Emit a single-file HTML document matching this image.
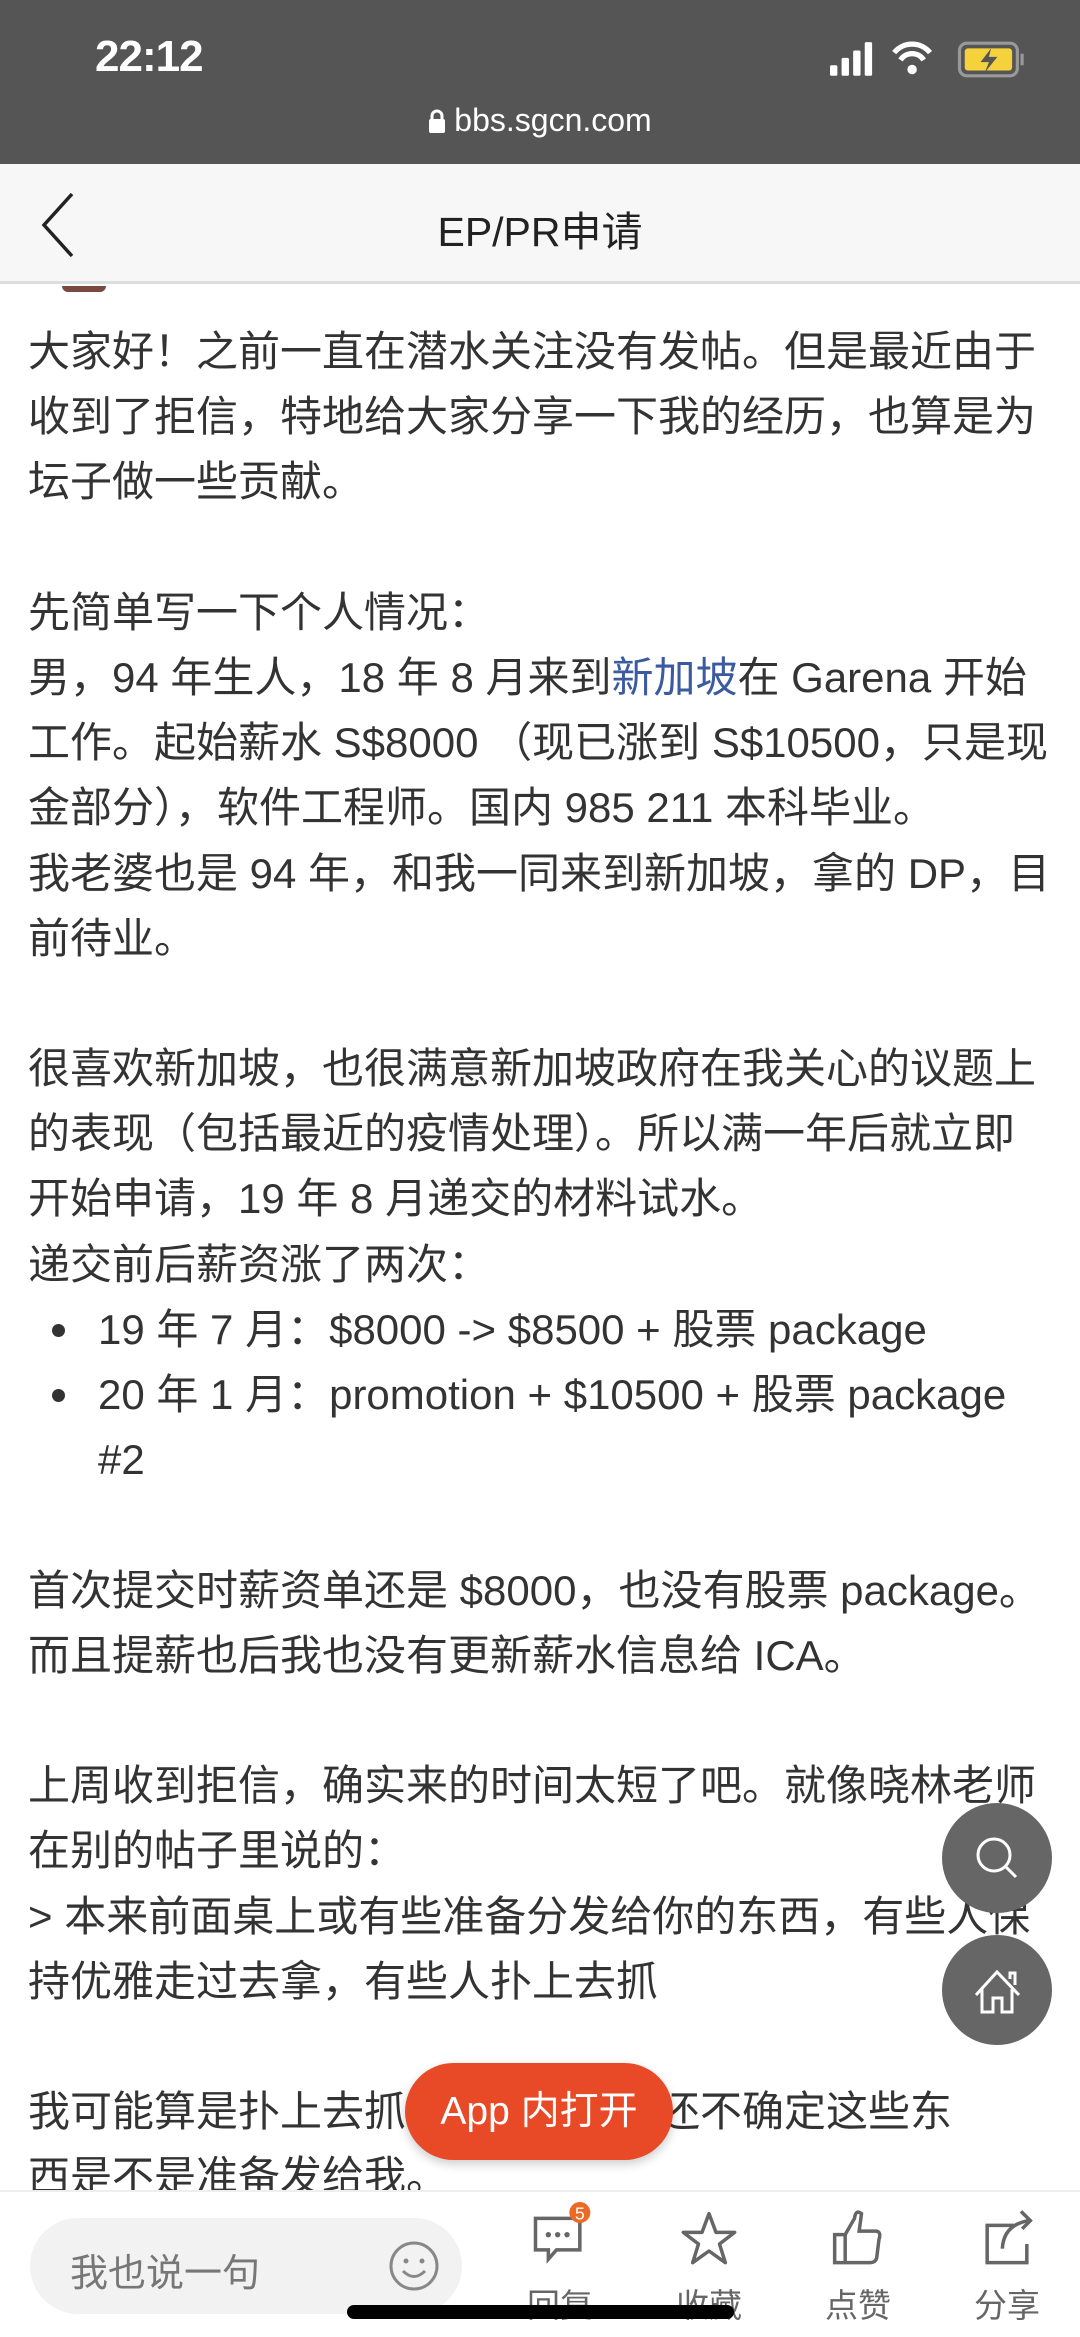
<!DOCTYPE html>
<html><head><meta charset="utf-8"><style>
*{margin:0;padding:0;box-sizing:border-box}
body{width:1080px;height:2337px;overflow:hidden;background:#fff;font-family:"Liberation Sans","Noto Sans CJK SC",sans-serif;color:#333;position:relative}
.status{position:absolute;left:0;top:0;width:1080px;height:164px;background:#555}
.time{position:absolute;left:95px;top:32px;font-size:44px;color:#fff;font-weight:bold;letter-spacing:-1px}
.url{position:absolute;left:0;width:1080px;top:102px;text-align:center;font-size:32px;color:#fff}
.nav{position:absolute;left:0;top:164px;width:1080px;height:120px;background:#f7f7f7;border-bottom:3px solid #ddd}
.title{position:absolute;left:0;width:1080px;top:34px;text-align:center;font-size:41px;color:#222}
.content{position:absolute;left:28px;top:319px;width:1040px;font-size:42px}
.l{height:65.2px;line-height:65.2px;white-space:nowrap;overflow:hidden}
.b{padding-left:70px;position:relative}
.b.dot:before{content:"";position:absolute;left:24px;top:27px;width:13px;height:13px;border-radius:50%;background:#333}
a{color:#3b5aa0;text-decoration:none}
.fab{position:absolute;left:942px;width:110px;height:110px;border-radius:50%;background:#666}
.app{position:absolute;left:405px;top:2063px;width:268px;height:97px;border-radius:49px;background:#e84a27;color:#fff;font-size:39px;text-align:center;line-height:97px;box-shadow:0 4px 10px rgba(0,0,0,.2)}
.bar{position:absolute;left:0;top:2190px;width:1080px;height:147px;background:#fff;border-top:2px solid #eee}
.pill{position:absolute;left:30px;top:26px;width:432px;height:96px;border-radius:48px;background:#f2f2f2}
.pill span{position:absolute;left:40px;top:24px;font-size:38px;color:#777}
.ic{position:absolute;top:10px;width:100px;text-align:center}
.ic div{font-size:33px;color:#666;margin-top:2px}
.home{position:absolute;left:347px;top:2305px;width:387px;height:14px;border-radius:7px;background:#000}
</style></head><body>
<div class="status">
<div class="time">22:12</div>
<svg style="position:absolute;left:830px;top:40px" width="200" height="40" viewBox="0 0 190 34">
<rect x="0" y="22" width="7" height="10" rx="1.5" fill="#fff"/><rect x="11" y="15" width="7" height="17" rx="1.5" fill="#fff"/><rect x="22" y="8" width="7" height="24" rx="1.5" fill="#fff"/><rect x="33" y="0" width="7" height="32" rx="1.5" fill="#fff"/>
<path d="M61 10 A22 22 0 0 1 95 10" stroke="#fff" stroke-width="5" fill="none"/><path d="M67 17 A13 13 0 0 1 89 17" stroke="#fff" stroke-width="5" fill="none"/><circle cx="78" cy="26" r="4.5" fill="#fff"/>
<rect x="123" y="1" width="55" height="31" rx="7" fill="none" stroke="#999" stroke-width="3"/><rect x="128" y="6" width="45" height="21" rx="3" fill="#f5d23c"/><rect x="181" y="11" width="3" height="11" fill="#999"/>
<path d="M153 6 L143 19 L151 19 L147 29 L159 14 L151 14 Z" fill="#555"/>
</svg>
<div class="url"><svg width="18" height="26" viewBox="0 0 18 26" style="vertical-align:-3px;margin-right:8px"><path d="M4 12 V8 a5 5 0 0 1 10 0 V12" stroke="#fff" stroke-width="3" fill="none"/><rect x="1" y="11" width="16" height="14" rx="2" fill="#fff"/></svg>bbs.sgcn.com</div>
</div>
<div class="nav">
<svg style="position:absolute;left:40px;top:28px" width="36" height="66" viewBox="0 0 36 66"><path d="M32 2 L4 33 L32 64" stroke="#222" stroke-width="3.5" fill="none"/></svg>
<div class="title">EP/PR申请</div>
</div>
<div style="position:absolute;left:62px;top:286px;width:44px;height:6px;background:#7a4a40;border-radius:0 0 20px 20px"></div>
<div class="content">
<div class="l">大家好！之前一直在潜水关注没有发帖。但是最近由于</div>
<div class="l">收到了拒信，特地给大家分享一下我的经历，也算是为</div>
<div class="l">坛子做一些贡献。</div>
<div class="l"></div>
<div class="l">先简单写一下个人情况：</div>
<div class="l">男，94 年生人，18 年 8 月来到<a>新加坡</a>在 Garena 开始</div>
<div class="l">工作。起始薪水 S$8000 （现已涨到 S$10500，只是现</div>
<div class="l">金部分），软件工程师。国内 985 211 本科毕业。</div>
<div class="l">我老婆也是 94 年，和我一同来到新加坡，拿的 DP，目</div>
<div class="l">前待业。</div>
<div class="l"></div>
<div class="l">很喜欢新加坡，也很满意新加坡政府在我关心的议题上</div>
<div class="l">的表现（包括最近的疫情处理）。所以满一年后就立即</div>
<div class="l">开始申请，19 年 8 月递交的材料试水。</div>
<div class="l">递交前后薪资涨了两次：</div>
<div class="l b dot">19 年 7 月：$8000 -&gt; $8500 + 股票 package</div>
<div class="l b dot">20 年 1 月：promotion + $10500 + 股票 package</div>
<div class="l b">#2</div>
<div class="l"></div>
<div class="l">首次提交时薪资单还是 $8000，也没有股票 package。</div>
<div class="l">而且提薪也后我也没有更新薪水信息给 ICA。</div>
<div class="l"></div>
<div class="l">上周收到拒信，确实来的时间太短了吧。就像晓林老师</div>
<div class="l">在别的帖子里说的：</div>
<div class="l">&gt; 本来前面桌上或有些准备分发给你的东西，有些人保</div>
<div class="l">持优雅走过去拿，有些人扑上去抓</div>
<div class="l"></div>
<div class="l">我可能算是扑上去抓的那种，因为还不确定这些东</div>
<div class="l">西是不是准备发给我。</div>
</div>
<div class="fab" style="top:1803px"><svg width="110" height="110" viewBox="0 0 110 110"><circle cx="52" cy="52" r="16" stroke="#fff" stroke-width="3" fill="none"/><path d="M63 63 L74 74" stroke="#fff" stroke-width="3"/></svg></div>
<div class="fab" style="top:1935px"><svg width="110" height="110" viewBox="0 0 110 110"><path d="M34 60 L55 37 L77 60 M40 54 V77 H51 V63 H60 V77 H70 V54 M68 44 V38 H73 V50" stroke="#fff" stroke-width="3" fill="none"/></svg></div>
<div class="app">App 内打开</div>
<div class="bar">
<div class="pill"><span>我也说一句</span>
<svg style="position:absolute;left:358px;top:22px" width="52" height="52" viewBox="0 0 52 52"><circle cx="26" cy="26" r="23" stroke="#888" stroke-width="3" fill="none"/><circle cx="18" cy="21" r="2.5" fill="#888"/><circle cx="34" cy="21" r="2.5" fill="#888"/><path d="M15 31 Q26 42 37 31" stroke="#888" stroke-width="3" fill="none"/></svg></div>
<div class="ic" style="left:510px"><svg width="70" height="70" viewBox="0 0 60 60"><path d="M9 14 H47 V41 H27 L20 49 V41 H9 Z" stroke="#666" stroke-width="3" fill="none"/><circle cx="20" cy="28" r="2.3" fill="#666"/><circle cx="28" cy="28" r="2.3" fill="#666"/><circle cx="36" cy="28" r="2.3" fill="#666"/><circle cx="47" cy="9" r="9" fill="#ea6a26"/><text x="47" y="15" font-size="15" fill="#fff" text-anchor="middle" font-family="Liberation Sans">5</text></svg><div>回复</div></div>
<div class="ic" style="left:659px"><svg width="70" height="70" viewBox="0 0 60 60"><path d="M30 10 L36 26 L52 26 L39 36 L44 52 L30 42 L16 52 L21 36 L8 26 L24 26 Z" stroke="#666" stroke-width="3" fill="none" stroke-linejoin="round"/></svg><div>收藏</div></div>
<div class="ic" style="left:808px"><svg width="70" height="70" viewBox="0 0 60 60"><path d="M10 28 H19 V52 H10 Z M19 28 L27 14 Q28 6 33 10 L31 25 H46 Q50 26 48 32 L46 48 Q45 52 40 52 H19" stroke="#666" stroke-width="3" fill="none"/></svg><div>点赞</div></div>
<div class="ic" style="left:957px"><svg width="70" height="70" viewBox="0 0 60 60"><path d="M36 20 H13 V52 H47 V36 M26 40 Q27 20 48 16 M42 8 L50 16 L43 23" stroke="#666" stroke-width="3" fill="none"/></svg><div>分享</div></div>
</div>
<div class="home"></div>
</body></html>
